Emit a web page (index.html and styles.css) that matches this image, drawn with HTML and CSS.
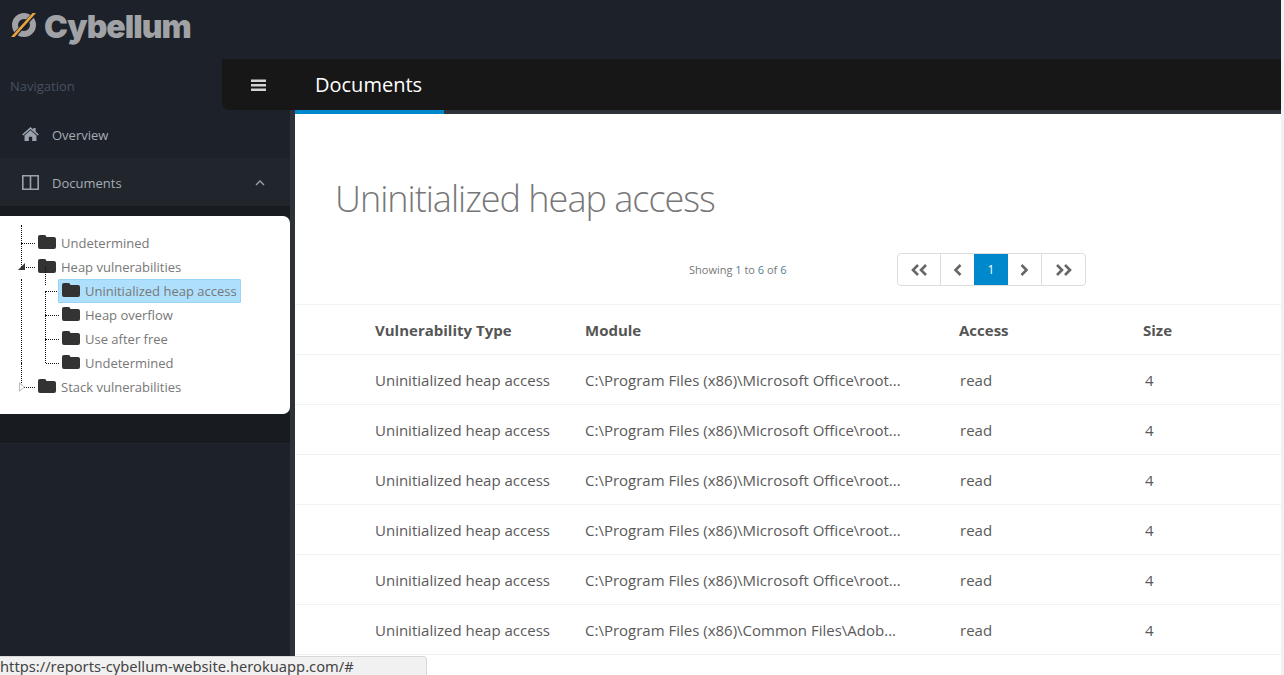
FILE: index.html
```html
<!DOCTYPE html>
<html lang="en">
<head>
    <meta charset="UTF-8">
    <title>Documents</title>
    <link rel="stylesheet" href="styles.css">
</head>
<body>
    <header class="topbar">
        <svg class="logo-mark" width="28" height="26" viewBox="0 0 28 26">
            <circle cx="14" cy="13" r="9" fill="none" stroke="#a0a2a6" stroke-width="6"/>
            <path d="M1 25 L5 25 L27 1 L23 1 Z" fill="#1d2129" stroke="#1d2129" stroke-width="1.5"/>
            <path d="M1 25 L4.5 25 L26 1 L22.5 1 Z" fill="#e8a33d"/>
        </svg>
        <span class="logo-text">Cybellum</span>
    </header>

    <div class="layout">
        <aside class="sidebar">
            <div class="nav-title">Navigation</div>
            <a href="#" class="nav-item">
                <svg class="nav-icon" width="17" height="14" viewBox="0 0 18 15">
                    <path d="M9 0 L12 2.6 V1 H14.5 V4.8 L18 8 L16.8 9.2 L9 2.4 L1.2 9.2 L0 8 Z" fill="#9aa3ad"/>
                    <path d="M9 3.6 L15.4 9.2 V15 H10.8 V10.5 H7.2 V15 H2.6 V9.2 Z" fill="#9aa3ad"/>
                </svg>
                <span>Overview</span>
            </a>
            <a href="#" class="nav-item active">
                <svg class="nav-icon" width="17" height="15" viewBox="0 0 17 15">
                    <path d="M0.8 0.8 H16.2 V14.2 H0.8 Z M8.5 0.8 V14.2" fill="none" stroke="#9aa3ad" stroke-width="1.6"/>
                </svg>
                <span>Documents</span>
                <svg class="nav-arrow" width="10" height="6" viewBox="0 0 10 6">
                    <path d="M1 5 L5 1 L9 5" fill="none" stroke="#9aa3ad" stroke-width="1.4"/>
                </svg>
            </a>
            <div class="subnav">
                <ul class="tree">
                    <li class="tree-row">
                        <span class="tree-link"></span>
                        <svg class="folder" width="18" height="14"><use href="#folder"/></svg>
                        <span class="tree-label">Undetermined</span>
                    </li>
                    <li class="tree-row">
                        <span class="tree-link"></span>
                        <span class="tree-open"></span>
                        <svg class="folder" width="18" height="14"><use href="#folder"/></svg>
                        <span class="tree-label">Heap vulnerabilities</span>
                    </li>
                    <li>
                        <ul class="tree tree-inner">
                            <li class="tree-row">
                                <span class="tree-link"></span>
                                <span class="tree-selected">
                                    <svg class="folder" width="18" height="14"><use href="#folder"/></svg>
                                    <span class="tree-label">Uninitialized heap access</span>
                                </span>
                            </li>
                            <li class="tree-row">
                                <span class="tree-link"></span>
                                <svg class="folder" width="18" height="14"><use href="#folder"/></svg>
                                <span class="tree-label">Heap overflow</span>
                            </li>
                            <li class="tree-row">
                                <span class="tree-link"></span>
                                <svg class="folder" width="18" height="14"><use href="#folder"/></svg>
                                <span class="tree-label">Use after free</span>
                            </li>
                            <li class="tree-row">
                                <span class="tree-link"></span>
                                <svg class="folder" width="18" height="14"><use href="#folder"/></svg>
                                <span class="tree-label">Undetermined</span>
                            </li>
                        </ul>
                    </li>
                    <li class="tree-row">
                        <span class="tree-link"></span>
                        <span class="tree-closed"></span>
                        <svg class="folder" width="18" height="14"><use href="#folder"/></svg>
                        <span class="tree-label">Stack vulnerabilities</span>
                    </li>
                </ul>
            </div>
        </aside>

        <div class="main">
            <div class="page-bar">
                <div class="toggle">
                    <svg width="15" height="13" viewBox="0 0 15 13">
                        <path d="M0 0.5 H15 V3 H0 Z M0 5 H15 V7.5 H0 Z M0 9.5 H15 V12 H0 Z" fill="#d4d4d4"/>
                    </svg>
                </div>
                <div class="page-tab">Documents</div>
            </div>
            <div class="page-line"><span class="page-line-tab"></span></div>

            <section class="content">
                <h1>Uninitialized heap access</h1>
                <div class="table-tools">
                    <span class="showing">Showing <b>1</b> to <b>6</b> of <b>6</b></span>
                    <div class="pagination">
                        <a href="#" class="page-btn first"><svg width="18" height="12" viewBox="0 0 18 12"><path d="M8 1 L3 6 L8 11 M16 1 L11 6 L16 11" fill="none" stroke="#666" stroke-width="2.6"/></svg></a>
                        <a href="#" class="page-btn prev"><svg width="9" height="12" viewBox="0 0 9 12"><path d="M7.5 1 L2.5 6 L7.5 11" fill="none" stroke="#666" stroke-width="2.6"/></svg></a>
                        <a href="#" class="page-btn current">1</a>
                        <a href="#" class="page-btn next"><svg width="9" height="12" viewBox="0 0 9 12"><path d="M1.5 1 L6.5 6 L1.5 11" fill="none" stroke="#666" stroke-width="2.6"/></svg></a>
                        <a href="#" class="page-btn last"><svg width="18" height="12" viewBox="0 0 18 12"><path d="M2 1 L7 6 L2 11 M10 1 L15 6 L10 11" fill="none" stroke="#666" stroke-width="2.6"/></svg></a>
                    </div>
                </div>

                <table class="vuln-table">
                    <thead>
                        <tr>
                            <th class="col-type">Vulnerability Type</th>
                            <th class="col-module">Module</th>
                            <th class="col-access">Access</th>
                            <th class="col-size">Size</th>
                        </tr>
                    </thead>
                    <tbody>
                        <tr><td>Uninitialized heap access</td><td>C:\Program Files (x86)\Microsoft Office\root...</td><td class="cell-access">read</td><td class="cell-size">4</td></tr>
                        <tr><td>Uninitialized heap access</td><td>C:\Program Files (x86)\Microsoft Office\root...</td><td class="cell-access">read</td><td class="cell-size">4</td></tr>
                        <tr><td>Uninitialized heap access</td><td>C:\Program Files (x86)\Microsoft Office\root...</td><td class="cell-access">read</td><td class="cell-size">4</td></tr>
                        <tr><td>Uninitialized heap access</td><td>C:\Program Files (x86)\Microsoft Office\root...</td><td class="cell-access">read</td><td class="cell-size">4</td></tr>
                        <tr><td>Uninitialized heap access</td><td>C:\Program Files (x86)\Microsoft Office\root...</td><td class="cell-access">read</td><td class="cell-size">4</td></tr>
                        <tr class="last-row"><td>Uninitialized heap access</td><td>C:\Program Files (x86)\Common Files\Adob...</td><td class="cell-access">read</td><td class="cell-size">4</td></tr>
                    </tbody>
                </table>
            </section>
        </div>
    </div>

    <div class="status-bubble">https://reports-cybellum-website.herokuapp.com/#</div>

    <svg class="defs" width="0" height="0">
        <symbol id="folder" viewBox="0 0 18 14">
            <path d="M0 2 Q0 0 2 0 H6.5 Q8 0 8.5 2 H16 Q18 2 18 4 V12 Q18 14 16 14 H2 Q0 14 0 12 Z" fill="#333"/>
        </symbol>
    </svg>
</body>
</html>
```

FILE: styles.css
```css
/* Basic Reset */
* {
    box-sizing: border-box;
    margin: 0;
    padding: 0;
}
html, body {
    height: 675px;
    overflow: hidden;
}
body {
    font-family: 'Open Sans', 'Noto Sans', sans-serif;
    background: #f1f1f1; /* shows as the scrollbar track on the right */
    padding-right: 3px;
    color: #777;
    font-size: 13px;
}
ul {
    list-style: none;
}
a {
    text-decoration: none;
}
.defs {
    position: absolute;
}

/* Top bar */
.topbar {
    height: 59px;
    display: flex;
    align-items: flex-start;
    padding: 12px 0 0 10px;
    background: #1d2129;
}
.logo-text {
    font-family: 'Inter', 'Open Sans', sans-serif;
    font-size: 32px;
    line-height: 30px;
    font-weight: 900;
    letter-spacing: -1px;
    color: #a0a2a6;
    margin-left: 6px;
}

.layout {
    display: flex;
    height: 616px;
}

/* Sidebar */
.sidebar {
    width: 290px;
    flex-shrink: 0;
    background: #1d2129;
}
.nav-title {
    height: 51px;
    padding: 17px 0 0 10px;
    font-size: 13px;
    line-height: 20px;
    color: #465162;
}
.nav-item {
    display: flex;
    align-items: center;
    height: 48px;
    padding: 2px 0 0 22px;
    color: #a4adb5;
    font-size: 13px;
}
.nav-item.active {
    background: #21262d;
}
.nav-icon {
    margin-right: 13px;
    position: relative;
    top: -1px;
}
.nav-arrow {
    margin-left: auto;
    margin-right: 25px;
}
.subnav {
    height: 238px;
    padding-top: 10px;
    background: #181c20;
    border-bottom: 1px solid #21262d;
}

/* Tree */
.tree {
    width: 290px;
    height: 198px;
    padding: 15px 0 0 21px;
    background: #fff;
    border-radius: 0 7px 7px 0;
    color: #777;
}
.tree-inner {
    width: auto;
    height: auto;
    padding: 0 0 0 24px;
    background: none;
    border-radius: 0;
}
.tree-row {
    display: flex;
    align-items: center;
    height: 24px;
    position: relative;
    line-height: 24px;
}
.tree-row::before {
    content: "";
    position: absolute;
    left: 0;
    top: -12px;
    height: 24px;
    border-left: 1px dotted #111;
}
.tree > .tree-row:first-child::before {
    top: -6px;
    height: 18px;
}
.tree-inner > .tree-row:first-child::before {
    top: -12px;
}
.tree > li:not(.tree-row) {
    border-left: 1px dotted #111;
}
.tree > li:not(.tree-row) .tree-inner {
    padding-left: 23px;
}
.tree-link {
    width: 13px;
    margin-left: 1px;
    margin-right: 3px;
    flex-shrink: 0;
    border-top: 1px dotted #111;
}
.tree-open {
    position: absolute;
    left: -3px;
    top: 8px;
    width: 0;
    height: 0;
    border-left: 7px solid transparent;
    border-bottom: 7px solid #333;
}
.tree-closed {
    position: absolute;
    left: -2px;
    top: 7px;
    width: 0;
    height: 0;
    border-top: 5px solid transparent;
    border-bottom: 5px solid transparent;
    border-left: 6px solid #bbb;
}
.tree-closed::after {
    content: "";
    position: absolute;
    left: -5px;
    top: -3px;
    width: 0;
    height: 0;
    border-top: 3px solid transparent;
    border-bottom: 3px solid transparent;
    border-left: 4px solid #fff;
}
.folder {
    flex-shrink: 0;
    margin-right: 5px;
    position: relative;
    top: -1px;
}
.tree-label {
    white-space: nowrap;
}
.tree-selected {
    display: flex;
    align-items: center;
    height: 24px;
    width: 183px;
    margin-left: -4px;
    padding-left: 3px;
    background: #aee0fd;
    border: 1px solid #99d4f5;
    border-radius: 1px;
}

/* Main column */
.main {
    flex: 1;
    display: flex;
    flex-direction: column;
    min-width: 0;
    background: #2f3139;
}
.page-bar {
    height: 51px;
    margin-left: -68px;
    display: flex;
    background: #171717;
    border-bottom-left-radius: 7px;
    position: relative;
}
.toggle {
    width: 73px;
    display: flex;
    align-items: center;
    justify-content: center;
    padding-top: 2px;
}
.page-tab {
    width: 149px;
    padding-left: 20px;
    font-size: 20px;
    line-height: 51px;
    color: #fff;
}
.page-line {
    height: 4px;
    padding-left: 5px;
}
.page-line-tab {
    display: block;
    width: 149px;
    height: 4px;
    background: #0088cc;
}

/* Content */
.content {
    flex: 1;
    margin-left: 5px;
    background: #fff;
    overflow: hidden;
}
h1 {
    font-size: 36px;
    line-height: 48px;
    font-weight: 300;
    color: #777;
    letter-spacing: -1px;
    padding: 61px 0 0 40px;
}
.table-tools {
    position: relative;
    height: 33px;
    margin-top: 30px;
    display: flex;
    align-items: center;
}
.showing {
    font-size: 11px;
    margin-left: 394px;
    color: #777;
    width: 208px;
}
.showing b {
    font-weight: 400;
    color: #4f7f9a;
}
.pagination {
    display: flex;
    height: 33px;
    border: 1px solid #ddd;
    border-radius: 4px;
    overflow: hidden;
}
.page-btn {
    display: flex;
    align-items: center;
    justify-content: center;
    color: #fff;
    font-size: 12px;
    border-right: 1px solid #ddd;
}
.page-btn:last-child {
    border-right: none;
}
.first { width: 43px; }
.prev { width: 33px; border-right: none; }
.current { width: 34px; background: #0088cc; border-right: none; }
.next { width: 34px; }
.last { width: 43px; }

.vuln-table {
    width: 100%;
    margin-top: 18px;
    border-collapse: collapse;
    table-layout: fixed;
    font-size: 15px;
    color: #5a5a5a;
}
.vuln-table th, .vuln-table td {
    height: 50px;
    text-align: left;
    font-weight: 400;
    border-top: 1px solid #f2f2f2;
    white-space: nowrap;
}
.vuln-table .last-row td {
    border-bottom: 1px solid #f2f2f2;
}
.vuln-table th {
    font-weight: 700;
    color: #555;
}
.vuln-table tr > :first-child {
    padding-left: 80px;
}
.col-type { width: 290px; }
.col-module { width: 374px; }
.col-access { width: 184px; }
.cell-access { padding-left: 1px; }
.cell-size { padding-left: 2px; }

/* Browser link bubble */
.status-bubble {
    position: absolute;
    left: 0;
    top: 656px;
    width: 427px;
    height: 19px;
    overflow: hidden;
    background: #f1f1f1;
    border: 1px solid #d8d8d8;
    border-width: 1px 1px 0 0;
    border-top-right-radius: 4px;
    font-family: 'Noto Sans', sans-serif;
    font-size: 14.7px;
    line-height: 18px;
    color: #444;
    white-space: nowrap;
}
```
